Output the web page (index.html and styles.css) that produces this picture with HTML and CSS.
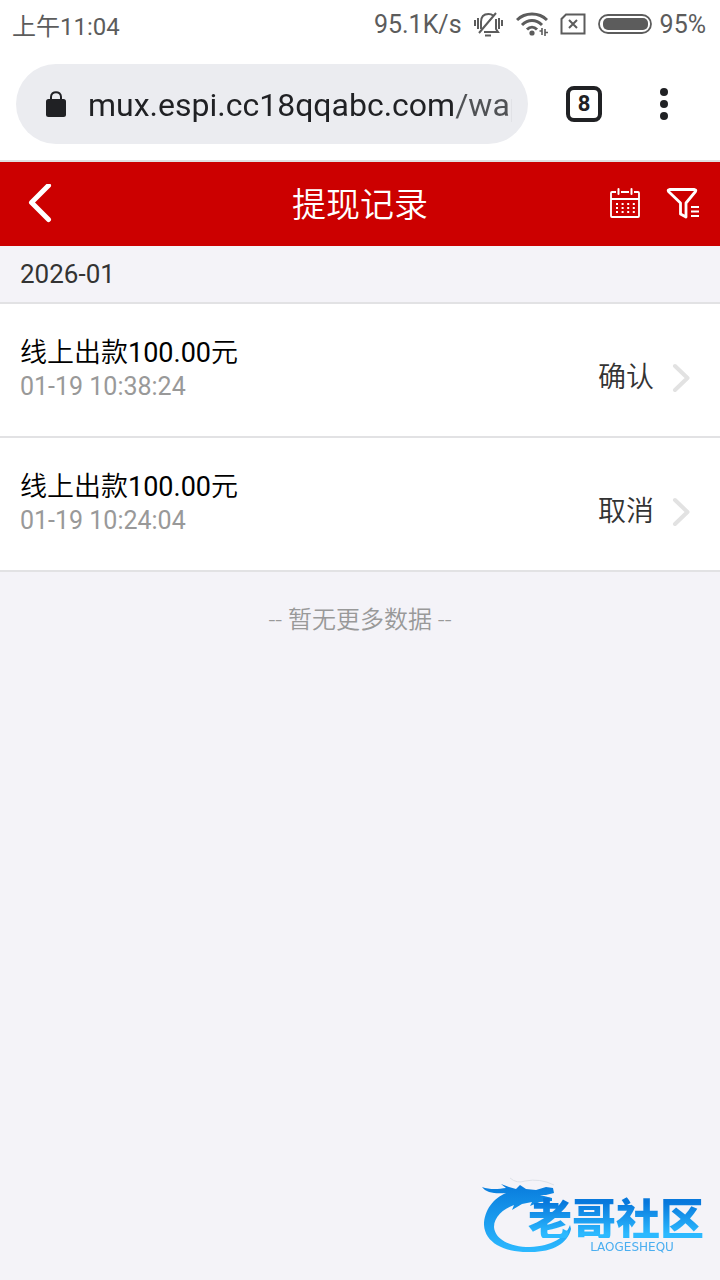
FILE: index.html
```html
<!DOCTYPE html>
<html lang="zh-CN">
<head>
<meta charset="utf-8">
<meta name="viewport" content="width=device-width, initial-scale=1">
<title>提现记录</title>
<link rel="stylesheet" href="styles.css">
</head>
<body>
<div class="status">
  <span class="clock">上午11:04</span>
  <div class="status-info">
    <span class="speed">95.1K/s</span>
    <svg class="mute" width="30" height="26" viewBox="0 0 30 26" fill="none" stroke="#5c5c5c" stroke-width="2" aria-hidden="true">
      <path d="M7 18V11C7 5 10 3 14.500 3C17 3 18 3.500 19 4.500M22 8V18L24 21H10M5 22L22 2"/>
      <path d="M11 24.500H17" stroke-width="2"/>
      <path d="M1 9V15M4 7V18M25 7V18M28 9V15" stroke-width="2"/>
    </svg>
    <svg class="wifi" width="32" height="26" viewBox="0 0 32 26" fill="none" stroke="#5c5c5c" stroke-width="3" aria-hidden="true">
      <path d="M1 9C9 1 23 1 31 9"/><path d="M6 14C12 8 20 8 26 14"/><path d="M11 18.500C14 15.500 18 15.500 21 18.500"/>
      <circle cx="16" cy="22" r="2.600" fill="#5c5c5c" stroke="none"/>
      <path d="M26 17V24M29 18V25M23.500 20H26M29 21.500H32" stroke-width="1.600"/>
    </svg>
    <svg class="sim" width="26" height="22" viewBox="0 0 26 22" fill="none" stroke="#5c5c5c" stroke-width="2" aria-hidden="true">
      <path d="M6 1.500H24.500V20.500H1.500V6Z"/><path d="M9 7L17 15M17 7L9 15"/>
    </svg>
    <svg class="battery" width="54" height="20" viewBox="0 0 54 20" aria-hidden="true">
      <rect x="1" y="1" width="52" height="18" rx="9" fill="none" stroke="#5c5c5c" stroke-width="1.800"/>
      <rect x="5" y="4" width="45" height="12" rx="5" fill="#5c5c5c"/>
    </svg>
    <span>95%</span>
  </div>
</div>

<div class="toolbar">
  <label class="address">
    <svg width="20" height="26" viewBox="0 0 20 26" aria-hidden="true">
      <rect y="8" width="20" height="18" rx="2.500" fill="#202124"/>
      <path d="M5 9V6C5 -0.500 15 -0.500 15 6V9" fill="none" stroke="#202124" stroke-width="2"/>
    </svg>
    <input class="url" type="text" aria-label="网址" value="mux.espi.cc18qqabc.com/wap" readonly>
  </label>
  <button class="tabs" type="button" aria-label="标签页">8</button>
  <button class="more" type="button" aria-label="更多">
    <svg width="8" height="32" viewBox="0 0 8 32" fill="#202124" aria-hidden="true"><circle cx="4" cy="4" r="4"/><circle cx="4" cy="16" r="4"/><circle cx="4" cy="28" r="4"/></svg>
  </button>
</div>

<header class="header">
  <div class="header-side">
    <button class="icon-button" type="button" aria-label="返回">
      <svg width="40" height="40" viewBox="0 0 40 40" fill="none" stroke="#fff" stroke-width="5" stroke-linecap="round" stroke-linejoin="round" aria-hidden="true"><path d="M28.500 1.500L11.500 18.500L28.500 35.500"/></svg>
    </button>
  </div>
  <h1 class="title">提现记录</h1>
  <div class="header-side header-actions">
    <button class="icon-button" type="button" aria-label="日期">
      <svg width="30" height="32" viewBox="0 0 30 32" fill="none" stroke="#fff" stroke-width="2" aria-hidden="true">
        <path d="M6 4H2Q1 4 1 5V28Q1 29 2 29H28Q29 29 29 28V5Q29 4 28 4H24M11 4H19M1 11H29" stroke-width="1.800"/>
        <path d="M8.500 1V6M21.500 1V6" stroke-linecap="round"/>
        <path d="M6 16H25M6 20H25M6 24H25" stroke-dasharray="2 3.600"/>
      </svg>
    </button>
    <button class="icon-button" type="button" aria-label="筛选">
      <svg width="34" height="32" viewBox="0 0 34 32" fill="none" stroke="#fff" stroke-width="2.800" stroke-linejoin="round" aria-hidden="true">
        <path d="M3.500 1.500H28.500Q30.500 2 29.500 3.500L20 15V29L14.500 26V15L2.500 3.500Q1.500 2 3.500 1.500Z"/>
        <path d="M25 19H33M25 23.500H33M25 28H33" stroke-width="2.200"/>
      </svg>
    </button>
  </div>
</header>

<main>
  <h2 class="month">2026-01</h2>
  <ul class="records">
    <li><a class="record" href="#">
      <span class="detail"><span class="amount">线上出款<span class="figure">100.00</span>元</span><time class="time">01-19 10:38:24</time></span>
      <span class="state">确认</span>
      <svg class="arrow" width="18" height="30" viewBox="0 0 18 30" fill="none" stroke="#e2e2e2" stroke-width="4" stroke-linecap="round" stroke-linejoin="round" aria-hidden="true"><path d="M3 3L15.500 15L3 27"/></svg>
    </a></li>
    <li><a class="record" href="#">
      <span class="detail"><span class="amount">线上出款<span class="figure">100.00</span>元</span><time class="time">01-19 10:24:04</time></span>
      <span class="state">取消</span>
      <svg class="arrow" width="18" height="30" viewBox="0 0 18 30" fill="none" stroke="#e2e2e2" stroke-width="4" stroke-linecap="round" stroke-linejoin="round" aria-hidden="true"><path d="M3 3L15.500 15L3 27"/></svg>
    </a></li>
  </ul>
  <p class="end">-- 暂无更多数据 --</p>
</main>

<div class="brand">
  <svg class="dragon" width="92" height="78" viewBox="0 0 92 78" aria-hidden="true">
    <defs><linearGradient id="blue" x1="0" y1="0" x2="0" y2="1"><stop offset="0" stop-color="#087bdc"/><stop offset="1" stop-color="#2cb9ff"/></linearGradient></defs>
    <path fill="url(#blue)" d="M0 11C8 14 17 13 24 12L19 8L27 11L34 13L38 9L44 13L54 14L64 11L71 12L72 17L64 19L58 19L70 22L70 25L58 26L48 30L50 26L40 28L30 34L32 29C21 33 12 41 12 51C13 63 27 71 48 71C70 70 83 62 88 49L89 53C86 67 71 76 49 76C23 77 3 67 2 49C2 34 12 22 24 17C14 18 4 17 0 11Z"/>
    <path fill="none" stroke="#dde0e7" d="M28 2Q35 8 43 5Q58 2 72 9"/>
  </svg>
  <div class="brand-text"><span class="brand-name">老哥社区</span><span class="brand-latin">LAOGESHEQU</span></div>
</div>
</body>
</html>
```
FILE: styles.css
```css
* { box-sizing: border-box; }
body {
  margin: 0;
  min-height: 100vh;
  background: #f4f3f8;
  color: #000;
  font-family: Roboto, "Noto Sans CJK SC", sans-serif;
}
button { border: 0; padding: 0; background: none; font: inherit; color: inherit; }
svg { display: block; flex: none; }
h1, h2, p, ul { margin: 0; padding: 0; font-weight: 400; }
ul { list-style: none; }

.status {
  display: flex;
  align-items: center;
  justify-content: space-between;
  height: 48px;
  padding: 0 14px 0 12px;
  background: #fff;
  color: #5c5c5c;
  font-size: 25px;
}
.clock { font-size: 24px; }
.status-info { display: flex; align-items: center; gap: 12px; }
.battery { margin-right: -4px; }

.toolbar {
  display: flex;
  align-items: center;
  height: 114px;
  padding: 2px 32px 2px 16px;
  background: #fff;
  border-bottom: 2px solid #e0e0e0;
  color: #202124;
}
.address {
  flex: 1;
  min-width: 0;
  display: flex;
  align-items: center;
  gap: 22px;
  height: 80px;
  padding: 0 16px 0 30px;
  border-radius: 40px;
  background: #ebecf0;
}
.url {
  flex: 1;
  min-width: 0;
  height: 48px;
  padding: 2px 0 0;
  border: 0;
  outline: 0;
  font: 32px/46px Roboto, sans-serif;
  color: transparent;
  background: linear-gradient(90deg, #202124 367px, #505255 367px);
  -webkit-background-clip: text;
  background-clip: text;
}
.tabs {
  width: 36px;
  height: 36px;
  margin: 0 38px;
  border: 4px solid #202124;
  border-radius: 8px;
  font-size: 22px;
  line-height: 28px;
  font-weight: 700;
}
.more { display: flex; justify-content: center; width: 48px; }

.header {
  display: flex;
  align-items: center;
  height: 84px;
  padding: 0 20px;
  background: #cc0000;
  color: #fff;
}
.header-side { flex: 1; display: flex; }
.header-actions { justify-content: flex-end; align-items: center; gap: 26px; }
.title { padding-top: 2px; font-size: 34px; line-height: 48px; font-weight: 350; }

.month {
  padding: 12px 20px;
  border-bottom: 2px solid #e2e2e4;
  color: #333;
  font-size: 26px;
  line-height: 32px;
}
.record {
  display: flex;
  align-items: center;
  height: 134px;
  padding: 0 30px 0 20px;
  background: #fff;
  border-bottom: 2px solid #e2e2e4;
  color: #333;
  text-decoration: none;
}
.detail { flex: 1; display: flex; flex-direction: column; margin-bottom: 2px; }
.amount { color: #000; font-size: 27px; line-height: 36px; }
.time { color: #999; font-size: 25px; line-height: 32px; }
.state { margin-right: 18px; font-size: 28px; line-height: 36px; }
.state, .arrow { margin-top: 16px; }
.amount, .state, .end { font-weight: 350; }
.figure { font-weight: 400; }
.end {
  padding: 30px 20px;
  color: #999;
  font-size: 24px;
  line-height: 36px;
  text-align: center;
}

.brand { position: fixed; right: 16px; bottom: 26px; display: flex; align-items: flex-end; }
.dragon { margin-right: -46px; }
.brand-text { display: flex; flex-direction: column; align-items: center; gap: 2px; }
.brand-name {
  font: 900 44px/42px "Noto Sans CJK SC", sans-serif;
  color: transparent;
  background: linear-gradient(#0878dc 15%, #2cb9ff 90%);
  -webkit-background-clip: text;
  background-clip: text;
}
.brand-latin { margin-left: 32px; color: #4aaef0; font: 12px/14px "DejaVu Sans", sans-serif; }
```
